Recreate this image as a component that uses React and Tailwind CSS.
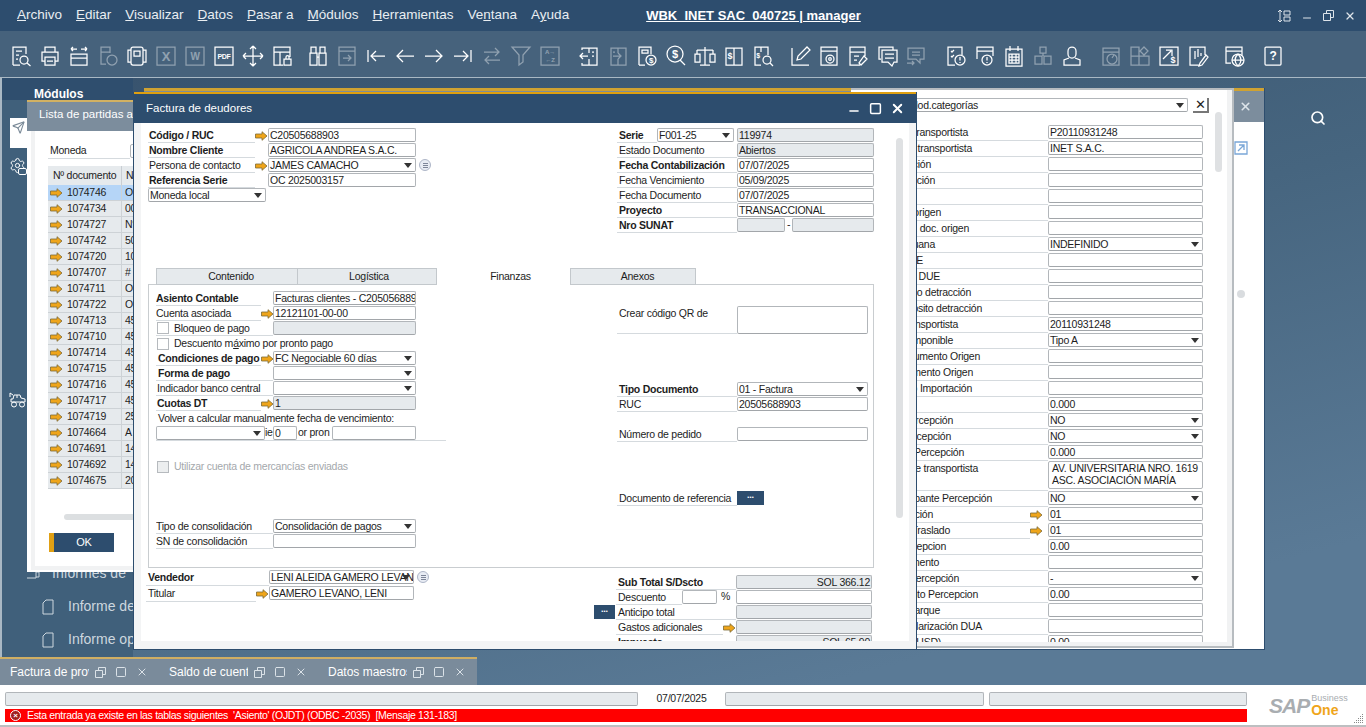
import React from "react";
import { Search, Minus, Square, X, Send, Settings } from "lucide-react";
import clsx from "clsx";

const Ic = ({ d, dim, c, t, t2, f = 7, tx = 11, ty = 14 }) => (
  <svg width="22" height="22" viewBox="0 0 22 22" fill="none" stroke="white" strokeWidth="1.25" className={dim ? "opacity-40" : ""}>
    <path d={d} />
    {c && c.map((o, i) => <circle key={i} cx={o[0]} cy={o[1]} r={o[2]} />)}
    {t && (
      <text x={tx} y={ty} fontSize={f} fill="white" stroke="none" textAnchor="middle" fontWeight="700" fontFamily="Liberation Sans, sans-serif">
        {t}
      </text>
    )}
    {t2 && (
      <text x={tx} y={ty + 8} fontSize={f} fill="white" stroke="none" textAnchor="middle" fontWeight="700" fontFamily="Liberation Sans, sans-serif">
        {t2}
      </text>
    )}
  </svg>
);

const toolbar = [
  {
    cls: "ml-[10px]",
    items: [
      { d: "M3 20V2h13v7M3 20h7M6 6h6M6 10h3M6 14h2M17 18l3.5 3", c: [[14, 15, 4]] },
      { d: "M6 7V2h10v5M6 16H3V7h16v9h-3M6 12h10v8H6zM8 16h6" },
      { d: "M3 4h6M3 4l2-2M3 4l2 2M13 4h6M19 4l-2-2M19 4l-2 2M3 9h16v11H3zM3 13h16" },
      { d: "M9 19H4V2h9v6M4 7h9", dim: true, c: [[15, 15, 5]] },
      { d: "M7 2h8a2 2 0 0 1 2 2v14a2 2 0 0 1-2 2H7a2 2 0 0 1-2-2V4a2 2 0 0 1 2-2zM5 5H2v12h3M17 5h3v12h-3M8 6h6v5H8z" },
      { d: "M2 2h18v18H2z", dim: true, t: "X", f: 13, ty: 16 },
      { d: "M2 2h18v18H2z", dim: true, t: "W", f: 10, ty: 15 },
      { d: "M2 2h18v18H2z", t: "PDF", f: 7, ty: 14 },
      { d: "M11 1v20M1 11h20M11 1L8 4M11 1l3 3M11 21l-3-3M11 21l3-3M1 11l3-3M1 11l3 3M21 11l-3-3M21 11l-3 3" },
      { d: "M3 2h16v5H3zM3 7v13h9M9 7v13M19 7v5M13 14h7v6h-7zM15 14v-2a1.5 1.5 0 0 1 3 0v2" },
    ],
  },
  {
    cls: "ml-[14px]",
    items: [
      { d: "M4 8V2h5v6M13 8V2h5v6M3 8h7v12H3zM12 8h7v12h-7zM10 12h2" },
      { d: "M3 2h16v18H3zM3 6h16M7 13h8M12 10l3 3-3 3", dim: true },
      { d: "M3 5v12M20 11H6M11 6l-5 5 5 5" },
      { d: "M20 11H3M9 5l-6 6 6 6" },
      { d: "M2 11h17M13 5l6 6-6 6" },
      { d: "M19 5v12M2 11h14M11 6l5 5-5 5" },
      { d: "M3 7h15M14 3l4 4-4 4M19 15H4M8 11l-4 4 4 4", dim: true },
      { d: "M2 2h18l-7 8v7l-4 3V10z", dim: true },
      { d: "M2 2h18v18H2z", dim: true, t: "A→", t2: "←Z", f: 6, ty: 9 },
    ],
  },
  {
    cls: "ml-[17px]",
    items: [
      { d: "M4 5V3h15v17H4v-2M11 3v5M11 14v6M2 11h8M5 8l-3 3 3 3M14 7h2M14 11h2" },
      { d: "M4 3h15v17H4zM11 3v5M11 14v6M6 11h8M11 8l3 3-3 3M6 7h2", dim: true },
      { d: "M3 20V2h12v7M3 20h6M6 5h6v3H6z", c: [[15, 15, 5]], t: "$", tx: 15, ty: 18, f: 8 },
      { d: "M15 15l5 5", c: [[10, 9, 8]], t: "$", tx: 10, ty: 13, f: 11 },
      { d: "M11 2v18M6 20h10M3 5h16M3 5v4M19 5v4M1 9h5v8H1zM16 9h5v8h-5z" },
      { d: "M3 3h16v17H3zM11 3v17", t: "$", tx: 7, ty: 14, f: 9 },
      { d: "M9 20H3V2h13v8M9 2v5M18 18l3 3", t: "$", tx: 6, ty: 13, f: 7, c: [[15, 15, 4]] },
    ],
  },
  {
    cls: "ml-[15px]",
    items: [
      { d: "M3 3v17h17M8 15l1-4 9-9 3 3-9 9z" },
      { d: "M3 2h16v18H3zM3 6h16", c: [[12, 14, 4], [12, 14, 1.3]] },
      { d: "M13 20H3V2h15v9M3 7h15M7 11h5M7 15h3M17 11l3 3-6 6-2-2z" },
      { d: "M17 5V2H3v12h2M6 5h15v12h-3l-2 4-4-4H6zM9 9h9M9 13h9" },
      { d: "M3 3h16v11h-4v4l-4-4H3zM7 7h8M7 10h8M2 18h7M7 16l2 2-2 2", dim: true },
    ],
  },
  {
    cls: "ml-[18px]",
    items: [
      { d: "M10 20H3V2h14v8M6 6l1 1 2-2M6 11l1 1 2-2M15 12v3.5M15 17v1", c: [[15, 15, 5]] },
      { d: "M3 14V2h16v9M3 6h16M13 12v3.5M13 17v1", c: [[13, 15, 5]] },
      { d: "M3 4h16v17H3zM7 1v5M15 1v5M6 9h10v9H6zM6 12h10M6 15h10M9 9v9M13 9v9" },
      { d: "M8 2h6v6H8zM11 8v3M3 11h7v8H3zM12 11h7v8h-7z", dim: true },
      { d: "M11 2a4 4 0 0 1 4 4v3a4 4 0 0 1-8 0V6a4 4 0 0 1 4-4zM8 13l-5 2v5h16v-5l-5-2" },
    ],
  },
  {
    cls: "ml-[17px]",
    items: [
      { d: "M3 3h16v17H3zM3 7h16M12 13l2-3", dim: true, c: [[12, 14, 5]] },
      { d: "M2 2h8v9H2zM2 11h8v9H2zM10 11h10v9H10zM15 2l4 4-4 4-4-4z", dim: true },
      { d: "M2 2h18v18H2zM5 14l8-8M8 5h6v6", t: "$", tx: 15, ty: 18, f: 9 },
      { d: "M12 20H3V2h15v8M8 6v8M11 4v8M14 8v3M19 10l2 2-6 8-3 1 1-3z" },
    ],
  },
  {
    cls: "ml-[14px]",
    items: [{ d: "M8 18H3V2h16v8M3 6h16M9 15h12M15 9c-4 4-4 8 0 12M15 9c4 4 4 8 0 12", c: [[15, 15, 6]] }],
  },
  {
    cls: "ml-[17px]",
    items: [{ d: "M4 2h14a1 1 0 0 1 1 1v16a1 1 0 0 1-1 1H4a1 1 0 0 1-1-1V3a1 1 0 0 1 1-1z", t: "?", f: 12, ty: 15 }],
  },
];

const Arrow = () => (
  <svg width="13" height="10" viewBox="0 0 13 10" className="shrink-0">
    <path d="M.5 3h6.5V.7L12 5 7 9.3V7H.5z" fill="#efa51a" stroke="#7c6a36" strokeWidth=".8" />
  </svg>
);

const Tri = () => (
  <span className="absolute right-[3px] top-[4px] h-0 w-0 border-x-[4.5px] border-t-[5px] border-x-transparent border-t-[#333]" />
);

const Info = () => (
  <span className="ml-[3px] mt-[1px] flex h-[12px] w-[12px] shrink-0 flex-col items-center justify-center gap-[1px] rounded-full border border-[#aeb6c8] bg-[#e8ecf4]">
    <i className="block h-px w-[5px] bg-[#7d8598]" />
    <i className="block h-px w-[5px] bg-[#7d8598]" />
    <i className="block h-px w-[5px] bg-[#7d8598]" />
  </span>
);

const Input = ({ value, w = "w-[137px]", gray, combo, right, h = "h-[14px]" }) => (
  <div
    className={clsx(
      "relative flex shrink-0 items-center overflow-hidden whitespace-nowrap rounded-[2px] border border-[#b2b6ba] border-b-[#a2a6aa] px-[1px] leading-none",
      w,
      h,
      gray ? "bg-[#e6eaed]" : "bg-white",
      right && "justify-end"
    )}
  >
    {value}
    {combo && <Tri />}
  </div>
);

const Row = ({ label, bold, w = "w-[120px]", lp = "pl-[1px]", arrow, arrowW = "w-[13px]", h = "h-[15px]", children, ml }) => (
  <div className={clsx("flex shrink-0", h, ml)}>
    <div className={clsx("flex h-full items-center overflow-hidden whitespace-nowrap border-b border-[#d5dade] leading-none", w, lp, bold && "font-bold")}>
      {label}
    </div>
    {arrow && (
      <div className={clsx("flex items-center justify-center", arrowW)}>
        <Arrow />
      </div>
    )}
    {children}
  </div>
);

const Check = ({ off }) => (
  <span className={clsx("ml-[1px] mr-[5px] h-[12px] w-[12px] shrink-0 border border-[#b6babe]", off ? "bg-[#eceeef]" : "bg-white")} />
);

const partidas = [
  ["1074746", "O"], ["1074734", "00"], ["1074727", "N°"], ["1074742", "50"], ["1074720", "10"],
  ["1074707", "#"], ["1074711", "O"], ["1074722", "O"], ["1074713", "45"], ["1074710", "45"],
  ["1074714", "45"], ["1074715", "45"], ["1074716", "45"], ["1074717", "45"], ["1074719", "25"],
  ["1074664", "A"], ["1074691", "14"], ["1074692", "14"], ["1074675", "20"],
];

const camposUsuario = [
  { l: "Cód. transportista", w: "w-[117px]", v: "P20110931248" },
  { l: "Nombre transportista", w: "w-[121px]", v: "INET S.A.C." },
  { l: "Ubicación", w: "w-[80px]" },
  { l: "Dirección", w: "w-[84px]" },
  { l: "" },
  { l: "Cód. origen", w: "w-[90px]" },
  { l: "Nro. doc. origen", w: "w-[118px]" },
  { l: "Aduana", w: "w-[84px]", v: "INDEFINIDO", combo: true },
  { l: "DUE", w: "w-[72px]" },
  { l: "Año DUE", w: "w-[89px]" },
  { l: "Tipo detracción", w: "w-[120px]" },
  { l: "Depósito detracción", w: "w-[131px]" },
  { l: "RUC transportista", w: "w-[107px]", v: "20110931248" },
  { l: "Imponible", w: "w-[102px]", v: "Tipo A", combo: true },
  { l: "Documento Origen", w: "w-[129px]" },
  { l: "Documento Origen", w: "w-[122px]" },
  { l: "Año Importación", w: "w-[121px]" },
  { l: "", v: "0.000" },
  { l: "Percepción", w: "w-[102px]", v: "NO", combo: true },
  { l: "Percepción", w: "w-[100px]", v: "NO", combo: true },
  { l: "% Percepción", w: "w-[113px]", v: "0.000" },
  { l: "Dirección de transportista", w: "w-[127px]", tall: true },
  { l: "Comprobante Percepción", w: "w-[141px]", v: "NO", combo: true },
  { l: "Ubicación", w: "w-[82px]", v: "01", arrow: true },
  { l: "Motivo Traslado", w: "w-[99px]", v: "01", arrow: true },
  { l: "Percepcion", w: "w-[95px]", v: "0.00" },
  { l: "Documento", w: "w-[88px]" },
  { l: "Percepción", w: "w-[108px]", v: "-", combo: true },
  { l: "Monto Percepcion", w: "w-[127px]", v: "0.00" },
  { l: "Embarque", w: "w-[89px]" },
  { l: "Regularización DUA", w: "w-[131px]" },
  { l: "Total (USD)", w: "w-[90px]", v: "0.00" },
];

const Dark = ({ w = "w-[27px]" }) => (
  <div className={clsx("flex h-[14px] items-start justify-center bg-[#2d4d6e] text-[9px] font-bold leading-[9px] text-white", w)}>...</div>
);

const TabBar = ({ title }) => (
  <div className="flex w-[160px] items-center pl-[10px]">
    <div className="w-[79px] overflow-hidden whitespace-nowrap text-[12px] tracking-normal text-white">{title}</div>
    <div className="ml-[6px] flex items-center gap-[9px] text-[#dbe2e8]">
      <svg width="11" height="11" viewBox="0 0 11 11" fill="none" stroke="currentColor">
        <path d="M.5 3.5h7v7h-7zM3.5 3.5v-3h7v7h-3" />
      </svg>
      <Square size={12} strokeWidth={1} absoluteStrokeWidth />
      <X size={12} strokeWidth={2} />
    </div>
  </div>
);

const IndicePagina = () => (
  <svg width="12" height="16" viewBox="0 0 12 16" fill="none" stroke="currentColor" className="mr-[14px] shrink-0">
    <path d="M4 1h7v14H1V4z" />
  </svg>
);

export default function App() {
  return (
    <div className="relative flex h-[727px] w-[1366px] flex-col overflow-hidden whitespace-nowrap bg-white font-['Liberation_Sans',sans-serif] text-[10.5px] tracking-[-0.25px] text-[#1d1d1d]">
      {/* menu */}
      <div className="relative flex h-[31px] shrink-0 items-center bg-[#2d4d6e] pl-[17px] text-[13.5px] tracking-normal text-[#e9eef2]">
        <div className="flex gap-[14px]">
          <span><u>A</u>rchivo</span>
          <span><u>E</u>ditar</span>
          <span><u>V</u>isualizar</span>
          <span><u>D</u>atos</span>
          <span><u>P</u>asar a</span>
          <span><u>M</u>ódulos</span>
          <span><u>H</u>erramientas</span>
          <span>Ve<u>n</u>tana</span>
          <span>A<u>y</u>uda</span>
        </div>
        <div className="ml-[77px] text-[13px] font-bold text-white underline">WBK_INET SAC_040725 | manager</div>
        <div className="ml-auto mr-[10px] flex items-center gap-[10px] text-[#dde4ea]">
          <svg width="14" height="14" viewBox="0 0 14 14" fill="none" stroke="currentColor">
            <path d="M3 1v12M1 3l2-2 2 2M1 11l2 2 2-2M7 2h6v4H7zM7 8h6v4H7z" />
          </svg>
          <Minus size={12} strokeWidth={2} className="mt-[5px]" />
          <svg width="11" height="11" viewBox="0 0 11 11" fill="none" stroke="currentColor">
            <path d="M.5 3.5h7v7h-7zM3.5 3.5v-3h7v7h-3" />
          </svg>
          <X size={12} strokeWidth={2.5} />
        </div>
      </div>

      {/* toolbar */}
      <div className="flex h-[47px] shrink-0 items-center border-b border-[#a9b8c4] bg-[#46627c] pt-[4px]">
        {toolbar.map((g, i) => (
          <div key={i} className={clsx("flex gap-[7px]", g.cls)}>
            {g.items.map((it, j) => (
              <Ic key={j} {...it} />
            ))}
          </div>
        ))}
      </div>

      {/* work area */}
      <div className="relative flex-1 bg-[linear-gradient(165deg,#37526d_0%,#46657f_45%,#5a7a96_85%)]">
        {/* modulos */}
        <div className="flex h-full w-[133px] flex-col border-l-2 border-[#a9b8c4] bg-[#40607b] tracking-normal">
          <div className="h-[22px] bg-[#2f4e6e] pl-[32px] pt-[9px] text-[12px] font-bold leading-[14px] text-white">Módulos</div>
          <div className="ml-[8px] mt-[18px] flex h-[30px] w-[17px] items-start justify-center bg-white pt-[3px]">
            <Send size={13} className="text-[#7a8a98]" />
          </div>
          <div className="relative ml-[7px] mt-[9px] h-[18px] w-[18px] text-white">
            <Settings size={17} strokeWidth={1.4} />
            <span className="absolute bottom-0 right-0 h-[7px] w-[9px] rounded-[2px] border border-white bg-[#40607b]" />
          </div>
          <svg width="18" height="16" viewBox="0 0 18 16" fill="none" stroke="white" className="ml-[7px] mt-[217px] shrink-0">
            <path d="M2 10h14V7l-4-1-1-3H5L4 7H2zM4 3L1 1v4M8 3v3" />
            <circle cx="5" cy="12.500" r="2.500" />
            <circle cx="13" cy="12.500" r="2.500" />
          </svg>
          <div className="relative mt-[149px] flex h-[33px] items-center pl-[24px] text-[14px] text-[#cdd7df]">
            <svg width="14" height="14" viewBox="0 0 14 14" fill="none" stroke="currentColor" className="mr-[12px] shrink-0">
              <path d="M1 1h9v10H1M10 5h3v5h-3" />
            </svg>
            <span>Informes de</span>
          </div>
          <div className="flex h-[33px] items-center pl-[40px] text-[14px] text-[#cdd7df]">
            <IndicePagina />
            <span>Informe de</span>
          </div>
          <div className="flex h-[33px] items-center pl-[40px] text-[14px] text-[#cdd7df]">
            <IndicePagina />
            <span>Informe op</span>
          </div>
        </div>

        <Search size={16} strokeWidth={2.5} className="absolute left-[1310px] top-[32px] text-white" />

        {/* ventana de atras */}
        <div className="absolute left-[144px] top-[10px] flex h-[562px] w-[1121px] flex-col border-r border-b border-[#2d4d6e] bg-white">
          <div className="h-[3px] shrink-0 bg-[#cfa232]" />
          <div className="flex h-[31px] shrink-0 items-center justify-end bg-[#7c8d9d] pr-[12px]">
            <X size={13} strokeWidth={3} className="text-[#dde4ea]" />
          </div>
          <div className="flex flex-1 flex-col items-end pr-[17px]">
            <svg width="14" height="14" viewBox="0 0 14 14" fill="none" stroke="#7aa7d8" strokeWidth="1.300" className="mt-[19px] mr-[-1px]">
              <path d="M1 1h12v12H1zM4 10l6-6M5 4h5v5" />
            </svg>
            <span className="mr-[2px] mt-[135px] h-[8px] w-[8px] rounded-full bg-[#d9dcdf]" />
          </div>
        </div>

        {/* lista */}
        <div className="absolute left-[27px] top-[22px] flex h-[472px] w-[300px] flex-col bg-white">
          <div className="h-[2px] shrink-0 bg-[#d2b162]" />
          <div className="flex h-[29px] shrink-0 items-center bg-[#7c8d9d] pb-[4px] pl-[12px] text-[11.500px] tracking-normal text-white">Lista de partidas a</div>
          <div className="mx-[4px] mb-[2px] flex flex-1 flex-col border-x-4 border-b-4 border-[#f1f2f3] pl-[13px]">
            <div className="mt-[12px] flex h-[16px] items-center">
              <div className="flex h-full w-[82px] items-center border-b border-[#d5dade] pl-[2px]">Moneda</div>
              <div className="h-[14px] w-[40px] rounded-[2px] border border-[#b2b6ba]" />
            </div>
            <div className="mt-[7px] flex h-[19px] w-[220px] shrink-0 bg-[#e6eaed]">
              <div className="flex w-[74px] items-center border-r border-[#c9ced3] pl-[5px]">Nº documento</div>
              <div className="flex items-center pl-[4px]">N</div>
            </div>
            {partidas.map((p, i) => (
              <div key={p[0]} className={clsx("flex h-[16px] w-[220px] shrink-0 border-b border-[#cdd2d6]", i === 0 ? "bg-[#b5d5f7]" : "bg-[#e6eaed]")}>
                <div className="flex w-[74px] items-center gap-[4px] border-r border-[#cdd2d6] pl-[2px]">
                  <Arrow />
                  {p[0]}
                </div>
                <div className="flex items-center pl-[3px]">{p[1]}</div>
              </div>
            ))}
            <div className="ml-[16px] mt-[25px] h-[6px] w-[200px] rounded-full bg-[#dcdfe1]" />
            <div className="ml-[1px] mt-[13px] flex h-[19px] w-[65px] items-center justify-center border-l-[5px] border-[#e0a014] bg-[#2d4d6e] text-[11px] text-white">OK</div>
          </div>
        </div>

        {/* campos de usuario */}
        <div className="absolute left-[851px] top-[10px] flex h-[560px] w-[383px] flex-col border-t-2 border-r-2 border-b-2 border-[#b7bcc0] bg-[#f1f2f3] pr-[5px] pb-[4px]">
          <div className="relative flex flex-1 flex-col overflow-hidden bg-white">
            <div className="mt-[8px] flex shrink-0 items-start">
              <Input w="w-[337px] justify-end pr-[209px]" value="Mod.categorías" combo />
              <div className="ml-[5px] flex h-[15px] w-[16px] items-center justify-center border-r-2 border-b-2 border-[#777] text-[13px] leading-none">✕</div>
            </div>
            <div className="mt-[12px] flex flex-col">
              {camposUsuario.map((c, i) => (
                <div key={i} className={clsx("flex shrink-0", c.tall ? "h-[30px]" : "h-[16px]")}>
                  <div className={clsx("flex h-full shrink-0 border-b border-[#d5dade]", c.arrow ? "w-[179px]" : "w-[197px]")}>
                    <div className={clsx("flex justify-end whitespace-nowrap leading-[14px]", c.w)}>{c.l}</div>
                  </div>
                  {c.arrow && (
                    <div className="flex w-[18px] items-center">
                      <Arrow />
                    </div>
                  )}
                  {c.tall ? (
                    <div className="h-[28px] w-[155px] overflow-hidden rounded-[2px] border border-[#b2b6ba] pl-[3px] leading-[12px]">
                      AV. UNIVERSITARIA NRO. 1619
                      <br />
                      ASC. ASOCIACIÓN MARÍA
                      <br />
                      GRACIA
                    </div>
                  ) : (
                    <Input w="w-[155px]" value={c.v} combo={c.combo} />
                  )}
                </div>
              ))}
            </div>
            <div className="absolute left-[364px] top-[22px] h-[60px] w-[7px] rounded-full bg-[#dfe1e3]" />
          </div>
        </div>

        {/* factura */}
        <div className="absolute left-[133px] top-[14px] flex h-[558px] w-[784px] flex-col border-x border-b border-[#2d4d6e] bg-[#f3f4f5]">
          <div className="h-[2px] shrink-0 bg-[#dfa010]" />
          <div className="flex h-[29px] shrink-0 items-center justify-between bg-[#2d4d6e] pl-[12px] pr-[11px] text-[11.500px] tracking-normal text-white">
            <span>Factura de deudores</span>
            <div className="flex items-center gap-[8px]">
              <Minus size={14} strokeWidth={2.5} className="mt-[5px]" />
              <Square size={13} strokeWidth={1.500} absoluteStrokeWidth />
              <X size={15} strokeWidth={3} />
            </div>
          </div>
          <div className="relative mx-[7px] mb-[8px] flex-1 overflow-hidden bg-white">
            {/* cabecera */}
            <div className="flex h-[145px]">
              <div className="w-[476px] pl-[7px] pt-[5px]">
                <Row w="w-[107px]" label="Código / RUC" bold arrow><Input w="w-[148px]" value="C20505688903" /></Row>
                <Row w="w-[107px]" label="Nombre Cliente" bold>
                  <div className="w-[13px]" />
                  <Input w="w-[148px]" value="AGRICOLA ANDREA S.A.C." />
                </Row>
                <Row w="w-[107px]" label="Persona de contacto" arrow>
                  <Input w="w-[148px]" value="JAMES CAMACHO" combo />
                  <Info />
                </Row>
                <Row w="w-[107px]" label="Referencia Serie" bold>
                  <div className="w-[13px]" />
                  <Input w="w-[148px]" value="OC 2025003157" />
                </Row>
                <Input w="w-[118px]" value="Moneda local" combo />
              </div>
              <div className="pt-[5px]">
                <div className="flex h-[15px]">
                  <div className="flex w-[40px] items-center border-b border-[#d5dade] pl-[2px] font-bold leading-none">Serie</div>
                  <Input w="w-[77px]" value="F001-25" combo />
                  <div className="w-[3px]" />
                  <Input gray value="119974" />
                </div>
                <Row lp="pl-[2px]" label="Estado Documento"><Input gray value="Abiertos" /></Row>
                <Row lp="pl-[2px]" label="Fecha Contabilización" bold><Input value="07/07/2025" /></Row>
                <Row lp="pl-[2px]" label="Fecha Vencimiento"><Input value="05/09/2025" /></Row>
                <Row lp="pl-[2px]" label="Fecha Documento"><Input value="07/07/2025" /></Row>
                <Row lp="pl-[2px]" label="Proyecto" bold><Input value="TRANSACCIONAL" /></Row>
                <Row lp="pl-[2px]" label="Nro SUNAT" bold>
                  <Input gray w="w-[48px]" />
                  <span className="w-[7px] text-center leading-[13px]">-</span>
                  <Input gray w="w-[82px]" />
                </Row>
              </div>
            </div>

            {/* tabs */}
            <div className="relative z-10 -mb-px ml-[15px] flex h-[17px]">
              <div className="flex w-[142px] items-center justify-center border border-[#c3c8cc] bg-[#e6eaed] pl-[8px]">Contenido</div>
              <div className="flex w-[139px] items-center justify-center border-y border-r border-[#c3c8cc] bg-[#e6eaed] pl-[4px]">Logística</div>
              <div className="flex w-[133px] items-center justify-center bg-white pl-[14px]">Finanzas</div>
              <div className="flex w-[126px] items-center justify-center border border-[#c3c8cc] bg-[#e6eaed] pl-[9px]">Anexos</div>
            </div>
            <div className="ml-[7px] flex h-[284px] w-[726px] border border-[#c9cdd0]">
              <div className="w-[468px] pl-[7px] pt-[6px]">
                <Row w="w-[105px]" lp="pl-0" label="Asiento Contable" bold>
                  <div className="w-[12px]" />
                  <Input w="w-[143px]" value="Facturas clientes - C20505688903" />
                </Row>
                <Row w="w-[105px]" lp="pl-0" label="Cuenta asociada" arrow arrowW="w-[12px]"><Input w="w-[143px]" value="12121101-00-00" /></Row>
                <Row w="w-[117px]" lp="pl-0" label={<><Check />Bloqueo de pago</>}><Input gray w="w-[143px]" /></Row>
                <div className="flex h-[15px] items-center leading-none"><Check />Descuento m<u>á</u>ximo por pronto pago</div>
                <Row w="w-[105px]" lp="pl-[2px]" label="Condiciones de pago" bold arrow arrowW="w-[12px]"><Input w="w-[143px]" value="FC Negociable 60 días" combo /></Row>
                <Row w="w-[117px]" lp="pl-[2px]" label="Forma de pago" bold><Input w="w-[143px]" combo /></Row>
                <Row w="w-[117px]" label="Indicador banco central"><Input w="w-[143px]" combo /></Row>
                <Row w="w-[105px]" label="Cuotas DT" bold arrow arrowW="w-[12px]"><Input gray w="w-[143px]" value="1" /></Row>
                <div className="flex h-[15px] items-center pl-[2px] leading-none">Volver a calcular manualmente fecha de vencimiento:</div>
                <div className="flex h-[15px] w-[290px] border-b border-[#d5dade]">
                  <Input w="w-[109px]" combo />
                  <span className="w-[8px] overflow-hidden leading-[13px]">ie</span>
                  <Input w="w-[24px]" value="0" />
                  <span className="w-[35px] pl-[1px] leading-[13px]">or pron</span>
                  <Input w="w-[84px]" />
                </div>
                <div className="mt-[18px] flex h-[15px] items-center leading-none text-[#a4a8ac]"><Check off />Utilizar cuenta de mercancías enviadas</div>
                <div className="h-[45px]" />
                <Row w="w-[117px]" lp="pl-0" label="Tipo de consolidación"><Input w="w-[143px]" value="Consolidación de pagos" combo /></Row>
                <Row w="w-[117px]" lp="pl-0" label="SN de consolidación"><Input w="w-[143px]" /></Row>
              </div>
              <div className="pt-[21px]">
                <Row h="h-[28px]" lp="pl-[2px]" label={<span className="self-start pt-[2px]">Crear código QR de</span>}><Input w="w-[131px]" h="h-[28px]" /></Row>
                <div className="h-[48px]" />
                <Row lp="pl-[2px]" label="Tipo Documento" bold><Input w="w-[131px]" value="01 - Factura" combo /></Row>
                <Row lp="pl-[2px]" label="RUC"><Input w="w-[131px]" value="20505688903" /></Row>
                <div className="h-[15px]" />
                <Row lp="pl-[2px]" label="Número de pedido"><Input w="w-[131px]" /></Row>
                <div className="h-[49px]" />
                <Row lp="pl-[2px]" label="Documento de referencia"><Dark /></Row>
              </div>
            </div>

            {/* pie */}
            <div className="flex">
              <div className="w-[453px] pl-[5px] pt-[2px]">
                <Row w="w-[123px]" lp="pl-[2px]" h="h-[16px]" label="Vendedor" bold>
                  <Input w="w-[145px]" value="LENI ALEIDA GAMERO LEVANO" combo />
                  <Info />
                </Row>
                <Row w="w-[110px]" lp="pl-[2px]" h="h-[16px]" label="Titular" arrow><Input w="w-[145px]" value="GAMERO LEVANO, LENI" /></Row>
              </div>
              <div className="pt-[7px]">
                <Row ml="ml-[22px]" lp="pl-[2px]" label="Sub Total S/Dscto" bold><Input gray w="w-[136px]" value="SOL 366.12" right /></Row>
                <Row ml="ml-[22px]" lp="pl-[2px]" w="w-[66px]" label="Descuento">
                  <Input w="w-[35px]" />
                  <span className="w-[19px] pl-[4px] leading-[13px]">%</span>
                  <Input w="w-[136px]" />
                </Row>
                <div className="flex h-[15px]">
                  <Dark w="w-[21px]" />
                  <div className="w-px" />
                  <Row lp="pl-[2px]" label="Anticipo total"><Input gray w="w-[136px]" /></Row>
                </div>
                <Row ml="ml-[22px]" lp="pl-[2px]" w="w-[107px]" label="Gastos adicionales" arrow><Input gray w="w-[136px]" /></Row>
                <Row ml="ml-[22px]" lp="pl-[2px]" label="Impuesto" bold><Input gray w="w-[136px]" value="SOL 65.90" right /></Row>
              </div>
            </div>

            <div className="absolute left-[755px] top-[15px] h-[380px] w-[7px] rounded-full bg-[#dfe1e3]" />
          </div>
        </div>

        {/* pestañas minimizadas */}
        <div className="absolute bottom-0 left-0 flex h-[28px] w-[477px] border-t-2 border-[#cfae63] bg-[#7a8b9b]">
          <TabBar title="Factura de proveedor" />
          <TabBar title="Saldo de cuenta" />
          <TabBar title="Datos maestros" />
        </div>
      </div>

      {/* status */}
      <div className="relative flex h-[42px] shrink-0 items-start border-b-2 border-[#bdbfc1] bg-white pl-[5px] pt-[7px]">
        <div className="w-[1242px]">
          <div className="flex h-[14px]">
            <Input gray w="w-[633px]" />
            <div className="w-[87px] text-center leading-[13px]">07/07/2025</div>
            <Input gray w="w-[259px]" />
            <div className="w-[5px]" />
            <Input gray w="w-[258px]" />
          </div>
          <div className="mt-[3px] flex h-[13px] items-center bg-[#ff0000] pl-[5px] leading-none tracking-[-0.32px] text-white">
            <span className="mr-[6px] flex h-[11px] w-[11px] items-center justify-center rounded-full border border-white bg-[#a02020] text-[8px] font-bold">×</span>
            <span className="whitespace-pre">Esta entrada ya existe en las tablas siguientes  'Asiento' (OJDT) (ODBC -2035)  [Mensaje 131-183]</span>
          </div>
        </div>
        <div className="ml-[22px] flex items-center pt-[2px] tracking-normal">
          <span className="text-[21px] font-bold italic leading-none tracking-[-1px] text-[#a9adb1]">SAP</span>
          <div className="ml-[2px] flex flex-col leading-none">
            <span className="text-[9px] text-[#a9adb1]">Business</span>
            <span className="text-[14px] font-bold text-[#efa51a]">One</span>
          </div>
        </div>
        <svg width="12" height="12" viewBox="0 0 12 12" fill="#888" className="absolute bottom-[1px] right-[2px]">
          <path d="M10 2h1v1h-1zM8 4h1v1H8zM10 4h1v1h-1zM6 6h1v1H6zM8 6h1v1H8zM10 6h1v1h-1zM4 8h1v1H4zM6 8h1v1H6zM8 8h1v1H8zM10 8h1v1h-1zM2 10h1v1H2zM4 10h1v1H4zM6 10h1v1H6zM8 10h1v1H8zM10 10h1v1h-1z" />
        </svg>
      </div>
    </div>
  );
}
